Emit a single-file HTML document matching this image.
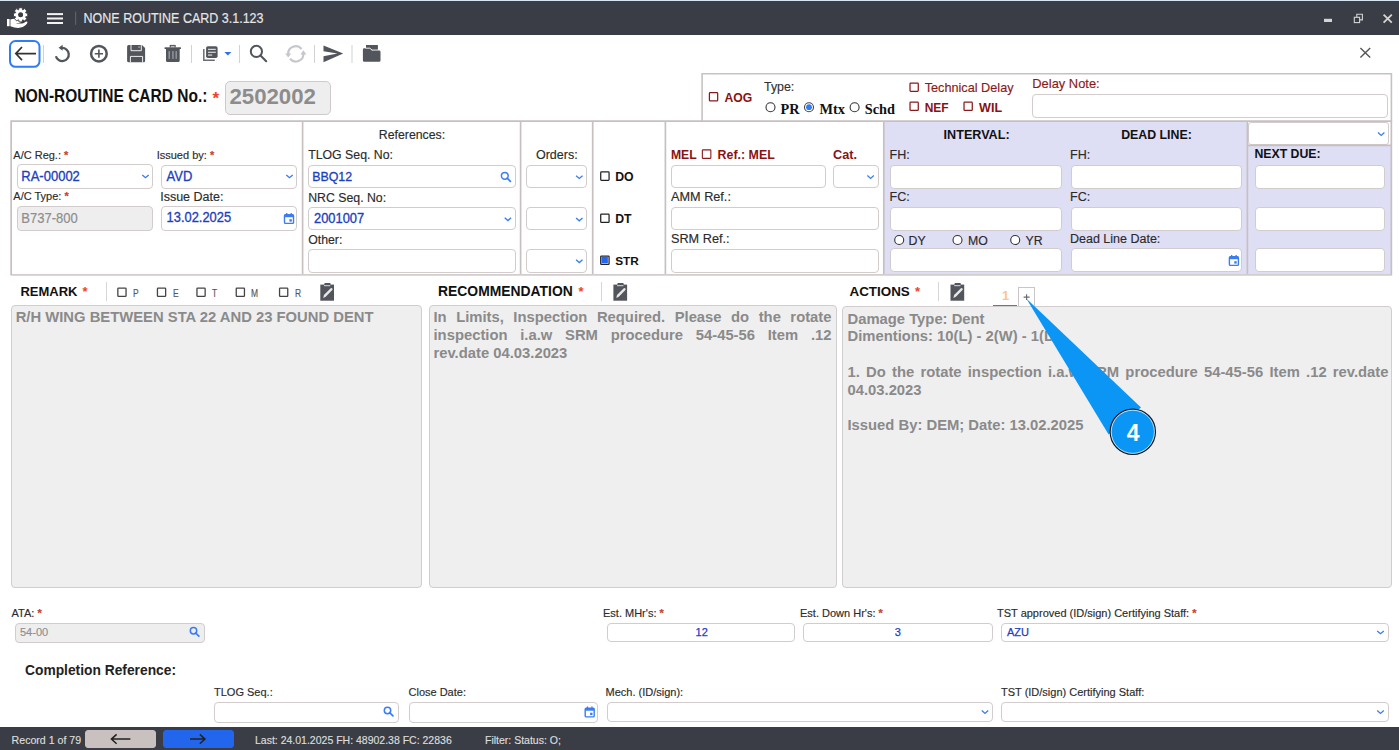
<!DOCTYPE html>
<html><head><meta charset="utf-8">
<style>
*{box-sizing:border-box;margin:0;padding:0}
html,body{width:1399px;height:750px;overflow:hidden;background:#fff;font-family:"Liberation Sans",sans-serif;color:#222;position:relative}
.a{position:absolute;white-space:nowrap}
</style></head><body>

<div class="a" style="left:0.0px;top:0.0px;width:1399.0px;height:35.0px;background:#3a3d45"></div>
<div class="a" style="left:0.0px;top:0.0px;width:1399.0px;height:1.0px;background:#d6e6f3"></div>
<div class="a" style="left:83.6px;top:13.3px;font-size:12.5px;font-weight:400;color:#e6e6e6;line-height:1;-webkit-text-stroke:0.15px #e6e6e6;transform:scaleY(1.1);transform-origin:0 85%">NONE ROUTINE CARD 3.1.123</div>
<svg class="a" style="left:0;top:0" width="1399" height="72" viewBox="0 0 1399 72">
 <!-- app icon: gear + hand -->
 <path fill="#fff" d="M7 19 H9.6 V26.2 H7 Z"/>
 <path fill="#fff" d="M10.4 19.4 Q12.6 18.6 15 18.7 L19 19.5 Q21.4 20.2 21.3 21.6 Q21.1 22.9 19.2 22.9 L16.6 22.9 Q16.4 23.5 17.4 23.6 L21.8 23.6 Q23.2 23.4 24.6 22.4 L25.6 21.7 Q27.3 20.9 27.5 22.3 Q27.4 23.4 25.8 24.9 Q22.6 27.9 18.4 28 Q14.2 28 10.4 26.2 Z"/>
 <g transform="translate(20.6 14.8)">
  <path d="M-1.88 -5.17 L-1.64 -7.11 L1.64 -7.11 L1.88 -5.17 L2.32 -4.98 L3.87 -6.19 L6.19 -3.87 L4.98 -2.32 L5.17 -1.88 L7.11 -1.64 L7.11 1.64 L5.17 1.88 L4.98 2.32 L6.19 3.87 L3.87 6.19 L2.32 4.98 L1.88 5.17 L1.64 7.11 L-1.64 7.11 L-1.88 5.17 L-2.32 4.98 L-3.87 6.19 L-6.19 3.87 L-4.98 2.32 L-5.17 1.88 L-7.11 1.64 L-7.11 -1.64 L-5.17 -1.88 L-4.98 -2.32 L-6.19 -3.87 L-3.87 -6.19 L-2.32 -4.98 Z" fill="#fff" stroke="#3a3d45" stroke-width="0.9" stroke-linejoin="round"/>
  <circle cx="0" cy="0" r="2.5" fill="#3a3d45"/>
 </g>
 <!-- hamburger -->
 <g fill="#f2f2f2"><rect x="47" y="13.1" width="16" height="2"/><rect x="47" y="17.5" width="16" height="2"/><rect x="47" y="22" width="16" height="2"/></g>
 <rect x="75" y="11.5" width="1.2" height="13.3" fill="#5c5f66"/>
 <!-- window controls -->
 <rect x="1324" y="18.8" width="8" height="3.2" fill="#d4d4d4"/>
 <g fill="none" stroke="#d4d4d4" stroke-width="1.1">
  <rect x="1354.3" y="17.3" width="5.3" height="5.3"/>
  <path d="M1356.8 17.3 V14.3 H1362.4 V19.9 H1359.6"/>
 </g>
 <path d="M1383.6 14.6 L1391.8 22.6 M1391.8 14.6 L1383.6 22.6" stroke="#d4d4d4" stroke-width="1.8"/>
 <!-- toolbar -->
 <rect x="10" y="41" width="29.5" height="25.8" rx="5.5" fill="none" stroke="#2f7cf6" stroke-width="2"/>
 <path d="M16 53.6 H36 M22 47 L15.8 53.6 L22 60.2" fill="none" stroke="#333" stroke-width="1.7"/>
 <g fill="#d2d2d2"><rect x="43" y="45" width="1" height="18"/><rect x="191" y="45" width="1" height="18"/><rect x="239" y="45" width="1" height="18"/><rect x="314" y="45" width="1" height="18"/><rect x="351.5" y="45" width="1" height="18"/></g>
 <g fill="none" stroke="#52555c">
  <path d="M55.9 56.2 A6.55 6.55 0 1 0 62 47.95" stroke-width="2.3"/>
  <circle cx="98.9" cy="53.7" r="7.8" stroke-width="2.5"/>
  <path d="M94.8 53.7 H103 M98.9 49.6 V57.8" stroke-width="1.6"/>
  <circle cx="256.4" cy="51.4" r="5.6" stroke-width="2"/>
  <path d="M260.5 55.6 L266.2 61.2" stroke-width="2.1" stroke-linecap="round"/>
  <path d="M203.8 49 V60.2 H214.8" stroke-width="1.5" stroke="#6a6d73"/>
 </g>
 <path d="M58.6 47.8 L62.6 44.8 L62.6 50.8 Z" fill="#52555c"/>
 <!-- save -->
 <path d="M128.6 44.9 H142 L145.1 48 V60.8 Q145.1 62.3 143.6 62.3 H128.6 Q127.1 62.3 127.1 60.8 V46.4 Q127.1 44.9 128.6 44.9 Z" fill="#52555c"/>
 <path d="M131 44.9 V50.7 H141.3 V44.9 M130.4 62.3 V56.4 H142.6 V62.3" fill="none" stroke="#fff" stroke-width="0.9"/>
 <rect x="138.4" y="46.3" width="1.4" height="1.6" fill="#aaa"/>
 <!-- trash -->
 <g fill="#52555c">
  <rect x="164.6" y="47.3" width="16.3" height="1.7"/>
  <rect x="169.7" y="44.9" width="6" height="2.6"/>
  <path d="M166 49 H179.7 V60.5 Q179.7 62 178.2 62 H167.5 Q166 62 166 60.5 Z"/>
 </g>
 <rect x="170.8" y="45.9" width="3.8" height="1.4" fill="#bbb"/>
 <g fill="#a9abb0"><rect x="168.6" y="51.1" width="1.1" height="7.8"/><rect x="172.4" y="51.1" width="1.1" height="7.8"/><rect x="175.6" y="51.1" width="1.1" height="7.8"/></g>
 <!-- copy -->
 <rect x="206.1" y="46.3" width="11.5" height="11.7" rx="1.8" fill="#52555c"/>
 <g fill="#e8e8e8"><rect x="208" y="48.8" width="7.8" height="1.1"/><rect x="208" y="51.7" width="7.8" height="1.1"/><rect x="208" y="54.5" width="4.2" height="1.1"/></g>
 <path d="M224.4 52 H231.4 L227.9 55.4 Z" fill="#2f6df6"/>
 <!-- sync -->
 <g fill="none" stroke="#c5c7cc" stroke-width="2.2">
  <path d="M301.6 49 A7.6 7.6 0 0 0 288.2 54.4"/>
  <path d="M303.4 53.6 A7.6 7.6 0 0 1 290 58.8"/>
 </g>
 <path d="M285.2 53.6 H291.2 L288.2 57.6 Z M300.4 54.4 H306.4 L303.4 50.3 Z" fill="#c5c7cc"/>
 <!-- send -->
 <path d="M323.5 45.4 L343.2 53.6 L323.5 62.2 L323.5 56.2 L337.4 53.6 L323.5 51.2 Z" fill="#52555c"/>
 <!-- folder -->
 <path d="M366 45 H377.9 V49.6 H366 Z" fill="#52555c"/>
 <path d="M364.2 48.3 H369.8 L372.2 50.6 H379.2 Q380.5 50.6 380.5 51.9 V60.4 Q380.5 61.7 379.2 61.7 H364.2 Q362.9 61.7 362.9 60.4 V49.6 Q362.9 48.3 364.2 48.3 Z" fill="#52555c"/>
 <path d="M365.5 48.2 L369.9 48.2 L372.3 50.4" stroke="#fff" stroke-width="0.9" fill="none"/>
 <!-- close X -->
 <path d="M1360.4 48 L1370.2 57.6 M1370.2 48 L1360.4 57.6" stroke="#555" stroke-width="1.4"/>
</svg>
<div class="a" style="left:14.5px;top:89.3px;font-size:15.5px;font-weight:700;color:#111;line-height:1;transform:scaleY(1.16);transform-origin:0 85%">NON-ROUTINE CARD No.:</div>
<div class="a" style="left:212.5px;top:90.0px;font-size:17px;font-weight:700;color:#f0402c;line-height:1;">*</div>
<div class="a" style="left:224.5px;top:80.5px;width:106.5px;height:34.0px;background:#eeeeee;border:1px solid #d0c9c9;border-radius:5px;"></div>
<div class="a" style="left:229.5px;top:86.3px;font-size:22.2px;font-weight:700;color:#8c8c8c;line-height:1;">2502002</div>
<div class="a" style="left:724.4px;top:91.9px;font-size:12.2px;font-weight:700;color:#8a1212;line-height:1;">AOG</div>
<div class="a" style="left:764.0px;top:81.2px;font-size:12.4px;font-weight:400;color:#333;line-height:1;-webkit-text-stroke:0.15px #333;">Type:</div>
<div class="a" style="left:780.5px;top:102.3px;font-size:12.5px;font-weight:700;color:#111;line-height:1;font-family:Liberation Serif,serif;font-size:14.3px">PR</div>
<div class="a" style="left:819.4px;top:102.3px;font-size:12.5px;font-weight:700;color:#111;line-height:1;font-family:Liberation Serif,serif;font-size:14.3px">Mtx</div>
<div class="a" style="left:864.7px;top:102.3px;font-size:12.5px;font-weight:700;color:#111;line-height:1;font-family:Liberation Serif,serif;font-size:14.3px">Schd</div>
<div class="a" style="left:924.7px;top:81.8px;font-size:12.7px;font-weight:400;color:#8a1a1a;line-height:1;-webkit-text-stroke:0.15px #8a1a1a;">Technical Delay</div>
<div class="a" style="left:924.7px;top:102.1px;font-size:12px;font-weight:700;color:#8a1212;line-height:1;">NEF</div>
<div class="a" style="left:979.0px;top:101.6px;font-size:12.6px;font-weight:700;color:#8a1212;line-height:1;">WIL</div>
<div class="a" style="left:1032.3px;top:78.3px;font-size:12.9px;font-weight:400;color:#8a1a1a;line-height:1;-webkit-text-stroke:0.15px #8a1a1a;">Delay Note:</div>
<div class="a" style="left:1032.0px;top:94.4px;width:355.5px;height:23.6px;background:#fff;border:1px solid #d3cccc;border-radius:4px;"></div>
<div class="a" style="left:884.0px;top:122.0px;width:363.0px;height:152.0px;background:#dedef5"></div>
<div class="a" style="left:1247.0px;top:145.0px;width:144.0px;height:129.0px;background:#dedef5"></div>
<div class="a" style="left:13.3px;top:149.7px;font-size:11px;font-weight:400;color:#2b2b2b;line-height:1;-webkit-text-stroke:0.15px #2b2b2b;">A/C Reg.: <span style="color:#f0402c;font-weight:700">*</span></div>
<div class="a" style="left:156.7px;top:149.7px;font-size:11px;font-weight:400;color:#2b2b2b;line-height:1;-webkit-text-stroke:0.15px #2b2b2b;">Issued by: <span style="color:#f0402c;font-weight:700">*</span></div>
<div class="a" style="left:17.0px;top:164.2px;width:136.0px;height:24.5px;background:#fff;border:1px solid #d3cccc;border-radius:4px;"></div>
<div class="a" style="left:21.3px;top:169.8px;font-size:13px;font-weight:400;color:#1c40c0;line-height:1;-webkit-text-stroke:0.15px #1c40c0;-webkit-text-stroke:0.3px #1c40c0;transform:scaleY(1.07);transform-origin:0 85%">RA-00002</div>
<div class="a" style="left:160.5px;top:164.5px;width:136.5px;height:24.2px;background:#fff;border:1px solid #d3cccc;border-radius:4px;"></div>
<div class="a" style="left:166.6px;top:169.8px;font-size:13px;font-weight:400;color:#1c40c0;line-height:1;-webkit-text-stroke:0.15px #1c40c0;-webkit-text-stroke:0.3px #1c40c0;transform:scaleY(1.07);transform-origin:0 85%">AVD</div>
<div class="a" style="left:13.3px;top:191.0px;font-size:11px;font-weight:400;color:#2b2b2b;line-height:1;-webkit-text-stroke:0.15px #2b2b2b;">A/C Type: <span style="color:#f0402c;font-weight:700">*</span></div>
<div class="a" style="left:160.2px;top:191.4px;font-size:12.5px;font-weight:400;color:#2b2b2b;line-height:1;-webkit-text-stroke:0.15px #2b2b2b;">Issue Date:</div>
<div class="a" style="left:17.0px;top:206.0px;width:136.0px;height:24.6px;background:#eeeeee;border:1px solid #d3cccc;border-radius:4px;"></div>
<div class="a" style="left:21.3px;top:211.5px;font-size:13px;font-weight:400;color:#8e8e8e;line-height:1;-webkit-text-stroke:0.15px #8e8e8e;-webkit-text-stroke:0.2px #8e8e8e;transform:scaleY(1.07);transform-origin:0 85%">B737-800</div>
<div class="a" style="left:160.5px;top:205.6px;width:136.5px;height:25.9px;background:#fff;border:1px solid #d3cccc;border-radius:4px;"></div>
<div class="a" style="left:166.6px;top:211.6px;font-size:12.9px;font-weight:400;color:#1c40c0;line-height:1;-webkit-text-stroke:0.15px #1c40c0;-webkit-text-stroke:0.3px #1c40c0;transform:scaleY(1.07);transform-origin:0 85%">13.02.2025</div>
<div class="a" style="left:212.0px;width:400px;text-align:center;top:129.0px;font-size:12.3px;font-weight:400;color:#2b2b2b;line-height:1;-webkit-text-stroke:0.15px #2b2b2b;">References:</div>
<div class="a" style="left:308.2px;top:148.9px;font-size:12.3px;font-weight:400;color:#2b2b2b;line-height:1;-webkit-text-stroke:0.15px #2b2b2b;">TLOG Seq. No:</div>
<div class="a" style="left:308.0px;top:164.7px;width:207.5px;height:23.7px;background:#fff;border:1px solid #d3cccc;border-radius:4px;"></div>
<div class="a" style="left:312.2px;top:170.5px;font-size:12.4px;font-weight:400;color:#1c40c0;line-height:1;-webkit-text-stroke:0.15px #1c40c0;-webkit-text-stroke:0.3px #1c40c0;transform:scaleY(1.07);transform-origin:0 85%">BBQ12</div>
<div class="a" style="left:308.2px;top:191.5px;font-size:12.3px;font-weight:400;color:#2b2b2b;line-height:1;-webkit-text-stroke:0.15px #2b2b2b;">NRC Seq. No:</div>
<div class="a" style="left:308.0px;top:207.4px;width:207.5px;height:23.1px;background:#fff;border:1px solid #d3cccc;border-radius:4px;"></div>
<div class="a" style="left:314.0px;top:212.7px;font-size:12.9px;font-weight:400;color:#1c40c0;line-height:1;-webkit-text-stroke:0.15px #1c40c0;-webkit-text-stroke:0.3px #1c40c0;transform:scaleY(1.07);transform-origin:0 85%">2001007</div>
<div class="a" style="left:308.2px;top:233.5px;font-size:12.3px;font-weight:400;color:#2b2b2b;line-height:1;-webkit-text-stroke:0.15px #2b2b2b;">Other:</div>
<div class="a" style="left:308.0px;top:248.7px;width:207.5px;height:23.9px;background:#fff;border:1px solid #d3cccc;border-radius:4px;"></div>
<div class="a" style="left:356.8px;width:400px;text-align:center;top:149.2px;font-size:12.5px;font-weight:400;color:#2b2b2b;line-height:1;-webkit-text-stroke:0.15px #2b2b2b;">Orders:</div>
<div class="a" style="left:526.4px;top:164.7px;width:60.8px;height:23.7px;background:#fff;border:1px solid #d3cccc;border-radius:4px;"></div>
<div class="a" style="left:526.4px;top:207.4px;width:60.8px;height:23.1px;background:#fff;border:1px solid #d3cccc;border-radius:4px;"></div>
<div class="a" style="left:526.4px;top:248.7px;width:60.8px;height:23.9px;background:#fff;border:1px solid #d3cccc;border-radius:4px;"></div>
<div class="a" style="left:615.2px;top:171.1px;font-size:12.3px;font-weight:700;color:#111;line-height:1;">DO</div>
<div class="a" style="left:615.2px;top:213.2px;font-size:12.3px;font-weight:700;color:#111;line-height:1;">DT</div>
<div class="a" style="left:615.2px;top:255.8px;font-size:11.8px;font-weight:700;color:#111;line-height:1;">STR</div>
<div class="a" style="left:670.9px;top:149.4px;font-size:12.2px;font-weight:700;color:#8a1212;line-height:1;">MEL</div>
<div class="a" style="left:717.6px;top:149.3px;font-size:12.4px;font-weight:700;color:#8a1212;line-height:1;">Ref.: MEL</div>
<div class="a" style="left:833.1px;top:149.0px;font-size:12.7px;font-weight:700;color:#8a1212;line-height:1;">Cat.</div>
<div class="a" style="left:671.0px;top:164.7px;width:155.0px;height:23.7px;background:#fff;border:1px solid #d3cccc;border-radius:4px;"></div>
<div class="a" style="left:833.0px;top:164.7px;width:45.7px;height:23.7px;background:#fff;border:1px solid #d3cccc;border-radius:4px;"></div>
<div class="a" style="left:671.0px;top:190.6px;font-size:12.7px;font-weight:400;color:#2b2b2b;line-height:1;-webkit-text-stroke:0.15px #2b2b2b;">AMM Ref.:</div>
<div class="a" style="left:671.0px;top:207.4px;width:207.7px;height:23.1px;background:#fff;border:1px solid #d3cccc;border-radius:4px;"></div>
<div class="a" style="left:671.0px;top:232.7px;font-size:12.7px;font-weight:400;color:#2b2b2b;line-height:1;-webkit-text-stroke:0.15px #2b2b2b;">SRM Ref.:</div>
<div class="a" style="left:671.0px;top:248.7px;width:207.7px;height:23.9px;background:#fff;border:1px solid #d3cccc;border-radius:4px;"></div>
<div class="a" style="left:776.6px;width:400px;text-align:center;top:128.8px;font-size:12.6px;font-weight:700;color:#111;line-height:1;">INTERVAL:</div>
<div class="a" style="left:956.5px;width:400px;text-align:center;top:129.0px;font-size:12.35px;font-weight:700;color:#111;line-height:1;">DEAD LINE:</div>
<div class="a" style="left:889.6px;top:148.8px;font-size:12.5px;font-weight:400;color:#2b2b2b;line-height:1;-webkit-text-stroke:0.15px #2b2b2b;">FH:</div>
<div class="a" style="left:1070.0px;top:148.8px;font-size:12.5px;font-weight:400;color:#2b2b2b;line-height:1;-webkit-text-stroke:0.15px #2b2b2b;">FH:</div>
<div class="a" style="left:889.6px;top:165.0px;width:172.4px;height:23.5px;background:#fff;border:1px solid #d3cccc;border-radius:4px;"></div>
<div class="a" style="left:1070.7px;top:165.0px;width:171.0px;height:23.5px;background:#fff;border:1px solid #d3cccc;border-radius:4px;"></div>
<div class="a" style="left:889.6px;top:190.8px;font-size:12.5px;font-weight:400;color:#2b2b2b;line-height:1;-webkit-text-stroke:0.15px #2b2b2b;">FC:</div>
<div class="a" style="left:1070.0px;top:190.8px;font-size:12.5px;font-weight:400;color:#2b2b2b;line-height:1;-webkit-text-stroke:0.15px #2b2b2b;">FC:</div>
<div class="a" style="left:889.6px;top:207.0px;width:172.4px;height:23.5px;background:#fff;border:1px solid #d3cccc;border-radius:4px;"></div>
<div class="a" style="left:1070.7px;top:207.0px;width:171.0px;height:23.5px;background:#fff;border:1px solid #d3cccc;border-radius:4px;"></div>
<div class="a" style="left:908.6px;top:234.9px;font-size:12.3px;font-weight:400;color:#2b2b2b;line-height:1;-webkit-text-stroke:0.15px #2b2b2b;">DY</div>
<div class="a" style="left:967.9px;top:234.9px;font-size:12.3px;font-weight:400;color:#2b2b2b;line-height:1;-webkit-text-stroke:0.15px #2b2b2b;">MO</div>
<div class="a" style="left:1025.5px;top:234.9px;font-size:12.3px;font-weight:400;color:#2b2b2b;line-height:1;-webkit-text-stroke:0.15px #2b2b2b;">YR</div>
<div class="a" style="left:1070.0px;top:233.1px;font-size:12.5px;font-weight:400;color:#2b2b2b;line-height:1;-webkit-text-stroke:0.15px #2b2b2b;">Dead Line Date:</div>
<div class="a" style="left:889.6px;top:248.3px;width:172.4px;height:23.9px;background:#fff;border:1px solid #d3cccc;border-radius:4px;"></div>
<div class="a" style="left:1070.7px;top:248.3px;width:171.0px;height:23.9px;background:#fff;border:1px solid #d3cccc;border-radius:4px;"></div>
<div class="a" style="left:1247.5px;top:122.0px;width:141.1px;height:23.0px;background:#fff;border:1px solid #d3cccc;border-radius:3px;"></div>
<div class="a" style="left:1254.4px;top:148.3px;font-size:12.3px;font-weight:700;color:#111;line-height:1;">NEXT DUE:</div>
<div class="a" style="left:1254.7px;top:165.0px;width:130.3px;height:23.5px;background:#fff;border:1px solid #d3cccc;border-radius:4px;"></div>
<div class="a" style="left:1254.7px;top:207.0px;width:130.3px;height:23.5px;background:#fff;border:1px solid #d3cccc;border-radius:4px;"></div>
<div class="a" style="left:1254.7px;top:248.3px;width:130.3px;height:23.9px;background:#fff;border:1px solid #d3cccc;border-radius:4px;"></div>
<div class="a" style="left:20.4px;top:285.3px;font-size:13px;font-weight:700;color:#111;line-height:1;">REMARK</div>
<div class="a" style="left:82.5px;top:285.3px;font-size:13px;font-weight:700;color:#f0402c;line-height:1;">*</div>
<div class="a" style="left:106.2px;top:282.3px;width:1.1px;height:18.3px;background:#d6d6d6"></div>
<div class="a" style="left:132.9px;top:287.8px;font-size:10.6px;font-weight:400;color:#555;line-height:1;-webkit-text-stroke:0.15px #555;transform:scaleX(0.8);transform-origin:left">P</div>
<div class="a" style="left:172.5px;top:287.8px;font-size:10.6px;font-weight:400;color:#555;line-height:1;-webkit-text-stroke:0.15px #555;transform:scaleX(0.8);transform-origin:left">E</div>
<div class="a" style="left:212.0px;top:287.8px;font-size:10.6px;font-weight:400;color:#555;line-height:1;-webkit-text-stroke:0.15px #555;transform:scaleX(0.8);transform-origin:left">T</div>
<div class="a" style="left:251.3px;top:287.8px;font-size:10.6px;font-weight:400;color:#555;line-height:1;-webkit-text-stroke:0.15px #555;transform:scaleX(0.8);transform-origin:left">M</div>
<div class="a" style="left:294.6px;top:287.8px;font-size:10.6px;font-weight:400;color:#555;line-height:1;-webkit-text-stroke:0.15px #555;transform:scaleX(0.8);transform-origin:left">R</div>
<div class="a" style="left:438.0px;top:284.6px;font-size:13.9px;font-weight:700;color:#111;line-height:1;">RECOMMENDATION</div>
<div class="a" style="left:578.5px;top:285.3px;font-size:13px;font-weight:700;color:#f0402c;line-height:1;">*</div>
<div class="a" style="left:601.3px;top:282.3px;width:1.1px;height:18.3px;background:#d6d6d6"></div>
<div class="a" style="left:849.5px;top:285.0px;font-size:13.4px;font-weight:700;color:#111;line-height:1;">ACTIONS</div>
<div class="a" style="left:915.0px;top:285.3px;font-size:13px;font-weight:700;color:#f0402c;line-height:1;">*</div>
<div class="a" style="left:938.0px;top:282.3px;width:1.1px;height:18.3px;background:#d6d6d6"></div>
<div class="a" style="left:1002.0px;top:288.6px;font-size:13px;font-weight:700;color:#fcc590;line-height:1;">1</div>
<div class="a" style="left:993.1px;top:304.6px;width:24.3px;height:2.0px;background:#3b7df0"></div>
<div class="a" style="left:1018.2px;top:287.1px;width:17.2px;height:20px;border:1px solid #cdc5c5;border-bottom:none;background:#fff"></div>
<div class="a" style="left:11.2px;top:305.4px;width:410.6px;height:283px;background:#efefef;border:1px solid #d3cccc;border-radius:4px"></div>
<div class="a" style="left:15.7px;top:309px;font-size:14.8px;font-weight:700;color:#8a8a8a;line-height:17.8px">R/H WING BETWEEN STA 22 AND 23 FOUND DENT</div>
<div class="a" style="left:429px;top:305.4px;width:407.7px;height:283px;background:#efefef;border:1px solid #d3cccc;border-radius:4px"></div>
<div class="a" style="left:433.5px;top:309px;width:398px;white-space:normal;text-align:justify;font-size:14.8px;font-weight:700;color:#8a8a8a;line-height:17.8px">In Limits, Inspection Required. Please do the rotate inspection i.a.w SRM procedure 54-45-56 Item .12 rev.date 04.03.2023</div>
<div class="a" style="left:842.2px;top:306.4px;width:549.6px;height:282px;background:#efefef;border:1px solid #d3cccc;border-radius:4px"></div>
<div class="a" style="left:847.5px;top:310.5px;width:541px;white-space:normal;text-align:justify;font-size:14.8px;font-weight:700;color:#8a8a8a;line-height:17.8px">Damage Type: Dent<br>Dimentions: 10(L) - 2(W) - 1(D)<br><br>1. Do the rotate inspection i.a.w SRM procedure 54-45-56 Item .12 rev.date 04.03.2023<br><br>Issued By: DEM; Date: 13.02.2025</div>
<div class="a" style="left:11.6px;top:607.9px;font-size:11px;font-weight:400;color:#2b2b2b;line-height:1;-webkit-text-stroke:0.15px #2b2b2b;">ATA: <span style="color:#f0402c;font-weight:700">*</span></div>
<div class="a" style="left:15.0px;top:622.5px;width:190.0px;height:20.0px;background:#eeeeee;border:1px solid #d3cccc;border-radius:4px;"></div>
<div class="a" style="left:20.0px;top:627.1px;font-size:11px;font-weight:400;color:#8e8e8e;line-height:1;-webkit-text-stroke:0.15px #8e8e8e;">54-00</div>
<div class="a" style="left:603.0px;top:607.6px;font-size:11px;font-weight:400;color:#2b2b2b;line-height:1;-webkit-text-stroke:0.15px #2b2b2b;">Est. MHr's: <span style="color:#f0402c;font-weight:700">*</span></div>
<div class="a" style="left:607.0px;top:622.9px;width:188.4px;height:18.8px;background:#fff;border:1px solid #d3cccc;border-radius:4px;"></div>
<div class="a" style="left:501.7px;width:400px;text-align:center;top:627.1px;font-size:11px;font-weight:400;color:#1c40c0;line-height:1;-webkit-text-stroke:0.15px #1c40c0;-webkit-text-stroke:0.25px #1c40c0">12</div>
<div class="a" style="left:800.0px;top:607.6px;font-size:11px;font-weight:400;color:#2b2b2b;line-height:1;-webkit-text-stroke:0.15px #2b2b2b;">Est. Down Hr's: <span style="color:#f0402c;font-weight:700">*</span></div>
<div class="a" style="left:803.4px;top:622.9px;width:189.6px;height:18.8px;background:#fff;border:1px solid #d3cccc;border-radius:4px;"></div>
<div class="a" style="left:697.7px;width:400px;text-align:center;top:627.1px;font-size:11px;font-weight:400;color:#1c40c0;line-height:1;-webkit-text-stroke:0.15px #1c40c0;-webkit-text-stroke:0.25px #1c40c0">3</div>
<div class="a" style="left:997.0px;top:607.6px;font-size:11px;font-weight:400;color:#2b2b2b;line-height:1;-webkit-text-stroke:0.15px #2b2b2b;">TST approved (ID/sign) Certifying Staff: <span style="color:#f0402c;font-weight:700">*</span></div>
<div class="a" style="left:1001.0px;top:622.9px;width:387.6px;height:18.8px;background:#fff;border:1px solid #d3cccc;border-radius:4px;"></div>
<div class="a" style="left:1006.9px;top:627.1px;font-size:11px;font-weight:400;color:#1c40c0;line-height:1;-webkit-text-stroke:0.15px #1c40c0;-webkit-text-stroke:0.25px #1c40c0">AZU</div>
<div class="a" style="left:25.0px;top:664.3px;font-size:13.8px;font-weight:700;color:#222;line-height:1;">Completion Reference:</div>
<div class="a" style="left:214.0px;top:686.6px;font-size:11px;font-weight:400;color:#2b2b2b;line-height:1;-webkit-text-stroke:0.15px #2b2b2b;">TLOG Seq.:</div>
<div class="a" style="left:214.0px;top:701.5px;width:185.0px;height:21.0px;background:#fff;border:1px solid #d3cccc;border-radius:4px;"></div>
<div class="a" style="left:408.5px;top:686.6px;font-size:11px;font-weight:400;color:#2b2b2b;line-height:1;-webkit-text-stroke:0.15px #2b2b2b;">Close Date:</div>
<div class="a" style="left:408.5px;top:701.5px;width:189.5px;height:21.0px;background:#fff;border:1px solid #d3cccc;border-radius:4px;"></div>
<div class="a" style="left:605.5px;top:686.6px;font-size:11px;font-weight:400;color:#2b2b2b;line-height:1;-webkit-text-stroke:0.15px #2b2b2b;">Mech. (ID/sign):</div>
<div class="a" style="left:607.0px;top:701.7px;width:386.0px;height:20.0px;background:#fff;border:1px solid #d3cccc;border-radius:4px;"></div>
<div class="a" style="left:1001.0px;top:686.6px;font-size:11px;font-weight:400;color:#2b2b2b;line-height:1;-webkit-text-stroke:0.15px #2b2b2b;">TST (ID/sign) Certifying Staff:</div>
<div class="a" style="left:1001.0px;top:701.7px;width:387.6px;height:20.0px;background:#fff;border:1px solid #d3cccc;border-radius:4px;"></div>
<div class="a" style="left:0.0px;top:727.0px;width:1399.0px;height:23.0px;background:#3a3d45"></div>
<div class="a" style="left:11.6px;top:734.9px;font-size:10.6px;font-weight:400;color:#dedede;line-height:1;-webkit-text-stroke:0.15px #dedede;">Record 1 of 79</div>
<div class="a" style="left:84.8px;top:730.2px;width:70.9px;height:17.8px;background:#c9c1c0;border:1px solid #c9c1c0;border-radius:3px;"></div>
<div class="a" style="left:162.9px;top:730.2px;width:71.0px;height:17.8px;background:#2266ee;border:1px solid #2266ee;border-radius:3px;"></div>
<div class="a" style="left:255.0px;top:735.0px;font-size:10.5px;font-weight:400;color:#dedede;line-height:1;-webkit-text-stroke:0.15px #dedede;">Last: 24.01.2025 FH: 48902.38 FC: 22836</div>
<div class="a" style="left:485.0px;top:735.0px;font-size:10.5px;font-weight:400;color:#dedede;line-height:1;-webkit-text-stroke:0.15px #dedede;">Filter: Status: O;</div>
<svg class="a" style="left:0;top:0" width="1399" height="750" viewBox="0 0 1399 750"><path d="M702.1 121 V73.8 H1391.4 V121" fill="none" stroke="#c9c1c1" stroke-width="1.6"/><rect x="709.42" y="92.72" width="8.25" height="8.25" rx="0.7" fill="#fff" stroke="#8a1a1a" stroke-width="1.25"/><circle cx="770.5" cy="107.2" r="4.5" fill="#fff" stroke="#333" stroke-width="1.1"/><circle cx="809.0" cy="107.2" r="4.5" fill="#fff" stroke="#444" stroke-width="1.1"/><circle cx="809" cy="107.2" r="2.9" fill="#2f7cf6"/><circle cx="854.6" cy="107.2" r="4.5" fill="#fff" stroke="#333" stroke-width="1.1"/><rect x="910.02" y="83.02" width="8.25" height="8.25" rx="0.7" fill="#fff" stroke="#8a1a1a" stroke-width="1.25"/><rect x="910.02" y="102.22" width="8.25" height="8.25" rx="0.7" fill="#fff" stroke="#8a1a1a" stroke-width="1.25"/><rect x="964.02" y="102.22" width="8.25" height="8.25" rx="0.7" fill="#fff" stroke="#8a1a1a" stroke-width="1.25"/><g fill="none" stroke="#c8c0c0" stroke-width="1.7"><path d="M11.15 120.2 V275.6 M10.3 121.1 H1392.2 M1391.35 120.2 V275.6"/><path d="M302.6 121 V274.5"/><path d="M520.6 121 V274.5"/><path d="M592.7 121 V274.5"/><path d="M665.4 121 V274.5"/><path d="M883.8 121 V274.5"/><path d="M1247.4 121 V274.5"/><path d="M1247.4 145.4 H1391"/></g><path d="M12 274.8 H1391" stroke="#d3cdcd" stroke-width="1.7"/><path d="M142.3 174.91 L145.5 177.69 L148.7 174.91" fill="none" stroke="#3b7df0" stroke-width="1.35"/><path d="M286.3 174.91 L289.5 177.69 L292.7 174.91" fill="none" stroke="#3b7df0" stroke-width="1.35"/><rect x="284.5" y="214.8" width="9" height="8.6" rx="1" fill="none" stroke="#3b7df0" stroke-width="1.4"/><rect x="284.5" y="214.8" width="9" height="2.4" fill="#3b7df0"/><rect x="286.1" y="213.0" width="1.3" height="2" fill="#3b7df0"/><rect x="290.6" y="213.0" width="1.3" height="2" fill="#3b7df0"/><rect x="289.4" y="219.2" width="2.4" height="2.4" fill="#3b7df0"/><circle cx="504.8" cy="175.8" r="3.4" fill="none" stroke="#3b7df0" stroke-width="1.5"/><path d="M507.2 178.2 L510.4 181.4" stroke="#3b7df0" stroke-width="1.7" stroke-linecap="round"/><path d="M504.7 217.81 L507.9 220.59 L511.1 217.81" fill="none" stroke="#3b7df0" stroke-width="1.35"/><path d="M576.1 175.66 L579.3 178.44 L582.5 175.66" fill="none" stroke="#3b7df0" stroke-width="1.35"/><path d="M576.1 218.06 L579.3 220.84 L582.5 218.06" fill="none" stroke="#3b7df0" stroke-width="1.35"/><path d="M576.1 259.76 L579.3 262.54 L582.5 259.76" fill="none" stroke="#3b7df0" stroke-width="1.35"/><rect x="600.72" y="171.93" width="8.35" height="8.35" rx="0.7" fill="#fff" stroke="#222" stroke-width="1.25"/><rect x="600.72" y="214.03" width="8.35" height="8.35" rx="0.7" fill="#fff" stroke="#222" stroke-width="1.25"/><rect x="600.72" y="256.02" width="8.35" height="8.35" rx="0.7" fill="#fff" stroke="#222" stroke-width="1.25"/><rect x="601.5" y="256.8" width="6.4" height="6.4" fill="#2466f4"/><rect x="702.35" y="149.85" width="8.50" height="8.50" rx="0.7" fill="#fff" stroke="#8a1a1a" stroke-width="1.1"/><path d="M867.4 175.61 L870.6 178.39 L873.8 175.61" fill="none" stroke="#3b7df0" stroke-width="1.35"/><circle cx="899.2" cy="240.0" r="4.5" fill="#fff" stroke="#333" stroke-width="1.1"/><circle cx="957.5" cy="240.0" r="4.5" fill="#fff" stroke="#333" stroke-width="1.1"/><circle cx="1015.2" cy="240.0" r="4.5" fill="#fff" stroke="#333" stroke-width="1.1"/><rect x="1229.4" y="256.8" width="9" height="8.6" rx="1" fill="none" stroke="#3b7df0" stroke-width="1.4"/><rect x="1229.4" y="256.8" width="9" height="2.4" fill="#3b7df0"/><rect x="1231.0" y="255.0" width="1.3" height="2" fill="#3b7df0"/><rect x="1235.5" y="255.0" width="1.3" height="2" fill="#3b7df0"/><rect x="1234.3" y="261.2" width="2.4" height="2.4" fill="#3b7df0"/><path d="M1378.0 132.61 L1381.2 135.39 L1384.4 132.61" fill="none" stroke="#3b7df0" stroke-width="1.35"/><rect x="117.85" y="288.15" width="8.20" height="8.20" rx="0.7" fill="#fff" stroke="#444" stroke-width="1.3"/><rect x="157.45" y="288.15" width="8.20" height="8.20" rx="0.7" fill="#fff" stroke="#444" stroke-width="1.3"/><rect x="196.95" y="288.15" width="8.20" height="8.20" rx="0.7" fill="#fff" stroke="#444" stroke-width="1.3"/><rect x="236.25" y="288.15" width="8.20" height="8.20" rx="0.7" fill="#fff" stroke="#444" stroke-width="1.3"/><rect x="279.55" y="288.15" width="8.20" height="8.20" rx="0.7" fill="#fff" stroke="#444" stroke-width="1.3"/><g transform="translate(320.3 283.1)"><rect x="0" y="1.5" width="13.7" height="16.1" fill="#52555c"/><rect x="4" y="0" width="6.3" height="2.6" rx="0.8" fill="#52555c"/><path d="M3.7 2.6 H10" stroke="#fff" stroke-width="0.8"/><path d="M2.9 14.8 L3.6 12 L10.4 5.2 Q11.2 4.6 12 5.4 Q12.6 6.2 12 6.9 L5.4 13.6 Z" fill="#e8e8e8"/></g><g transform="translate(613.4 283.1)"><rect x="0" y="1.5" width="13.7" height="16.1" fill="#52555c"/><rect x="4" y="0" width="6.3" height="2.6" rx="0.8" fill="#52555c"/><path d="M3.7 2.6 H10" stroke="#fff" stroke-width="0.8"/><path d="M2.9 14.8 L3.6 12 L10.4 5.2 Q11.2 4.6 12 5.4 Q12.6 6.2 12 6.9 L5.4 13.6 Z" fill="#e8e8e8"/></g><g transform="translate(950.5 283.1)"><rect x="0" y="1.5" width="13.7" height="16.1" fill="#52555c"/><rect x="4" y="0" width="6.3" height="2.6" rx="0.8" fill="#52555c"/><path d="M3.7 2.6 H10" stroke="#fff" stroke-width="0.8"/><path d="M2.9 14.8 L3.6 12 L10.4 5.2 Q11.2 4.6 12 5.4 Q12.6 6.2 12 6.9 L5.4 13.6 Z" fill="#e8e8e8"/></g><path d="M1023.6 297.1 H1029.6 M1026.6 294.2 V300" stroke="#6a6a6a" stroke-width="1.1"/><circle cx="193.5" cy="630.8" r="3.2" fill="none" stroke="#3b7df0" stroke-width="1.5"/><path d="M195.7 633.0 L198.9 636.2" stroke="#3b7df0" stroke-width="1.7" stroke-linecap="round"/><path d="M1377.2 630.89 L1380.5 633.71 L1383.8 630.89" fill="none" stroke="#3b7df0" stroke-width="1.35"/><circle cx="387.5" cy="710.5" r="3.2" fill="none" stroke="#3b7df0" stroke-width="1.5"/><path d="M389.7 712.7 L392.9 715.9" stroke="#3b7df0" stroke-width="1.7" stroke-linecap="round"/><rect x="585.2" y="708.3" width="9" height="8.6" rx="1" fill="none" stroke="#3b7df0" stroke-width="1.4"/><rect x="585.2" y="708.3" width="9" height="2.4" fill="#3b7df0"/><rect x="586.8" y="706.5" width="1.3" height="2" fill="#3b7df0"/><rect x="591.3" y="706.5" width="1.3" height="2" fill="#3b7df0"/><rect x="590.1" y="712.7" width="2.4" height="2.4" fill="#3b7df0"/><path d="M981.8 710.59 L985.0 713.41 L988.2 710.59" fill="none" stroke="#3b7df0" stroke-width="1.35"/><path d="M1377.2 710.59 L1380.5 713.41 L1383.8 710.59" fill="none" stroke="#3b7df0" stroke-width="1.35"/><path d="M111 739.1 H130.4 M116.6 734.4 L111.4 739.1 L116.6 743.8" fill="none" stroke="#222" stroke-width="1.5"/><path d="M190 739.1 H205.4 M199.8 734.4 L205 739.1 L199.8 743.8" fill="none" stroke="#222" stroke-width="1.5"/><path d="M1026.3 298.6 L1141 407.5 L1108.6 434.5 Z" fill="#0b96f6"/><circle cx="1132.8" cy="431.8" r="22.6" fill="#0b96f6" stroke="#1a1a1a" stroke-width="1.3"/><circle cx="1132.8" cy="431.8" r="21.6" fill="none" stroke="#fff" stroke-width="0.7"/></svg>
<div class="a" style="left:933.2px;width:400px;text-align:center;top:421.6px;font-size:23px;font-weight:700;color:#fff;line-height:1;">4</div>
</body></html>
